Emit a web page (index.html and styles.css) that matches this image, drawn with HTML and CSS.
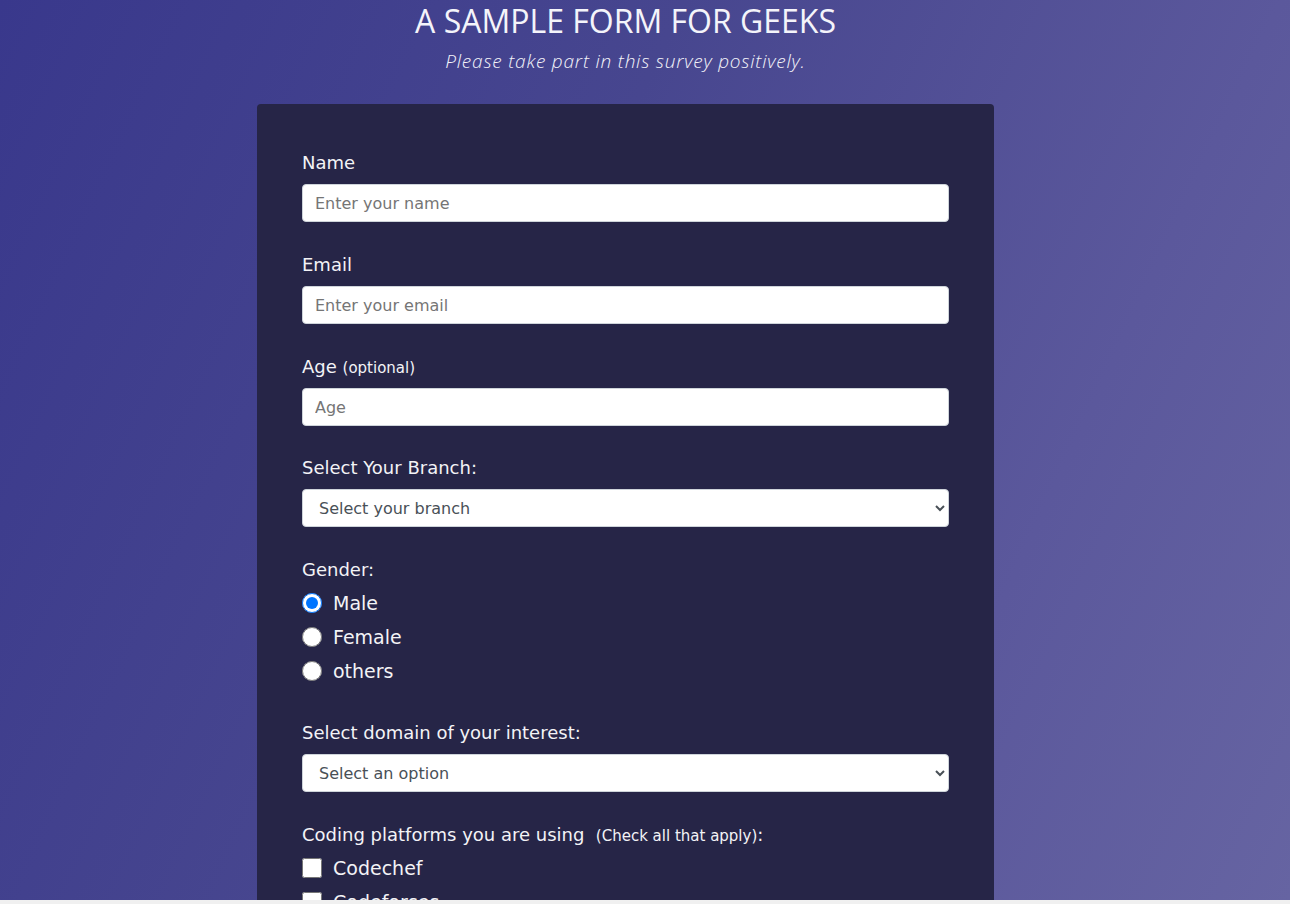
FILE: index.html
```html
<!DOCTYPE html>
<html>
<head>
<meta charset="utf-8">
<link rel="stylesheet" href="styles.css">
</head>
<body>
<div class="page">
  <div class="container">
    <header class="header">
      <h1 class="title">A SAMPLE FORM FOR GEEKS</h1>
      <p class="description">Please take part in this survey positively.</p>
    </header>
    <form class="card">
      <div class="group">
        <label class="label" for="name">Name</label>
        <input class="control" id="name" type="text" placeholder="Enter your name">
      </div>
      <div class="group">
        <label class="label" for="email">Email</label>
        <input class="control" id="email" type="email" placeholder="Enter your email">
      </div>
      <div class="group group-tight">
        <label class="label" for="age">Age <span class="small">(optional)</span></label>
        <input class="control" id="age" type="number" placeholder="Age">
      </div>
      <div class="group">
        <label class="label" for="branch">Select Your Branch:</label>
        <select class="control select" id="branch">
          <option>Select your branch</option>
        </select>
      </div>
      <div class="group group-choices">
        <p class="label">Gender:</p>
        <label class="choice"><input class="radio" type="radio" name="g" checked>Male</label>
        <label class="choice"><input class="radio" type="radio" name="g">Female</label>
        <label class="choice"><input class="radio" type="radio" name="g">others</label>
      </div>
      <div class="group">
        <label class="label" for="domain">Select domain of your interest:</label>
        <select class="control select" id="domain">
          <option>Select an option</option>
        </select>
      </div>
      <div class="group group-choices">
        <p class="label">Coding platforms you are using&nbsp; <span class="small">(Check all that apply)</span>:</p>
        <label class="choice"><input class="check" type="checkbox">Codechef</label>
        <label class="choice"><input class="check" type="checkbox">Codeforces</label>
        <label class="choice"><input class="check" type="checkbox">Leetcode</label>
      </div>
    </form>
  </div>
</div>
</body>
</html>
```
FILE: styles.css
```css
* { box-sizing: border-box; }
html, body { margin: 0; padding: 0; }
body {
  background: #f0f0f0;
  font-family: "DejaVu Sans", "Open Sans", sans-serif;
}
.page {
  height: 900px;
  overflow: hidden;
  background: linear-gradient(115deg, #39388c 0%, #47468f 40%, #5b589c 75%, #6664a2 100%);
}
.container {
  width: 737px;
  margin-left: 257px;
}
.header {
  text-align: center;
  color: #f4f4fa;
}
.title {
  margin: 0;
  padding-top: 2px;
  font-family: "Open Sans", sans-serif;
  font-size: 32px;
  font-weight: 400;
  line-height: 38px;
}
.description {
  margin: 7px 0 0;
  font-family: "Open Sans", sans-serif;
  font-size: 19px;
  font-style: italic;
  font-weight: 300;
  letter-spacing: 0.8px;
  line-height: 28px;
}
.card {
  margin-top: 29px;
  background: #262547;
  border-radius: 4px;
  padding: 45px 45px 20px;
  color: #f3f3f6;
}
.group {
  margin-bottom: 29px;
}
.group-tight { margin-bottom: 28px; }
.label {
  display: block;
  margin: 0 0 8px;
  font-size: 18px;
  line-height: 27px;
}
.small { font-size: 15px; line-height: 1; }
.control {
  display: block;
  width: 100%;
  height: 38px;
  padding: 6px 12px;
  border: 1px solid #ced4da;
  border-radius: 4px;
  background: #fff;
  font-family: inherit;
  font-size: 16px;
  color: #495057;
}
.control::placeholder { color: #757575; }
.select { padding-left: 12px; }
.group-choices { margin-bottom: 31px; }
.group-choices .label { margin-bottom: 3px; }
.choice {
  display: flex;
  align-items: center;
  height: 34px;
  font-size: 19px;
}
.radio, .check {
  width: 20px;
  height: 20px;
  margin: 0 11px 0 0;
}
```
